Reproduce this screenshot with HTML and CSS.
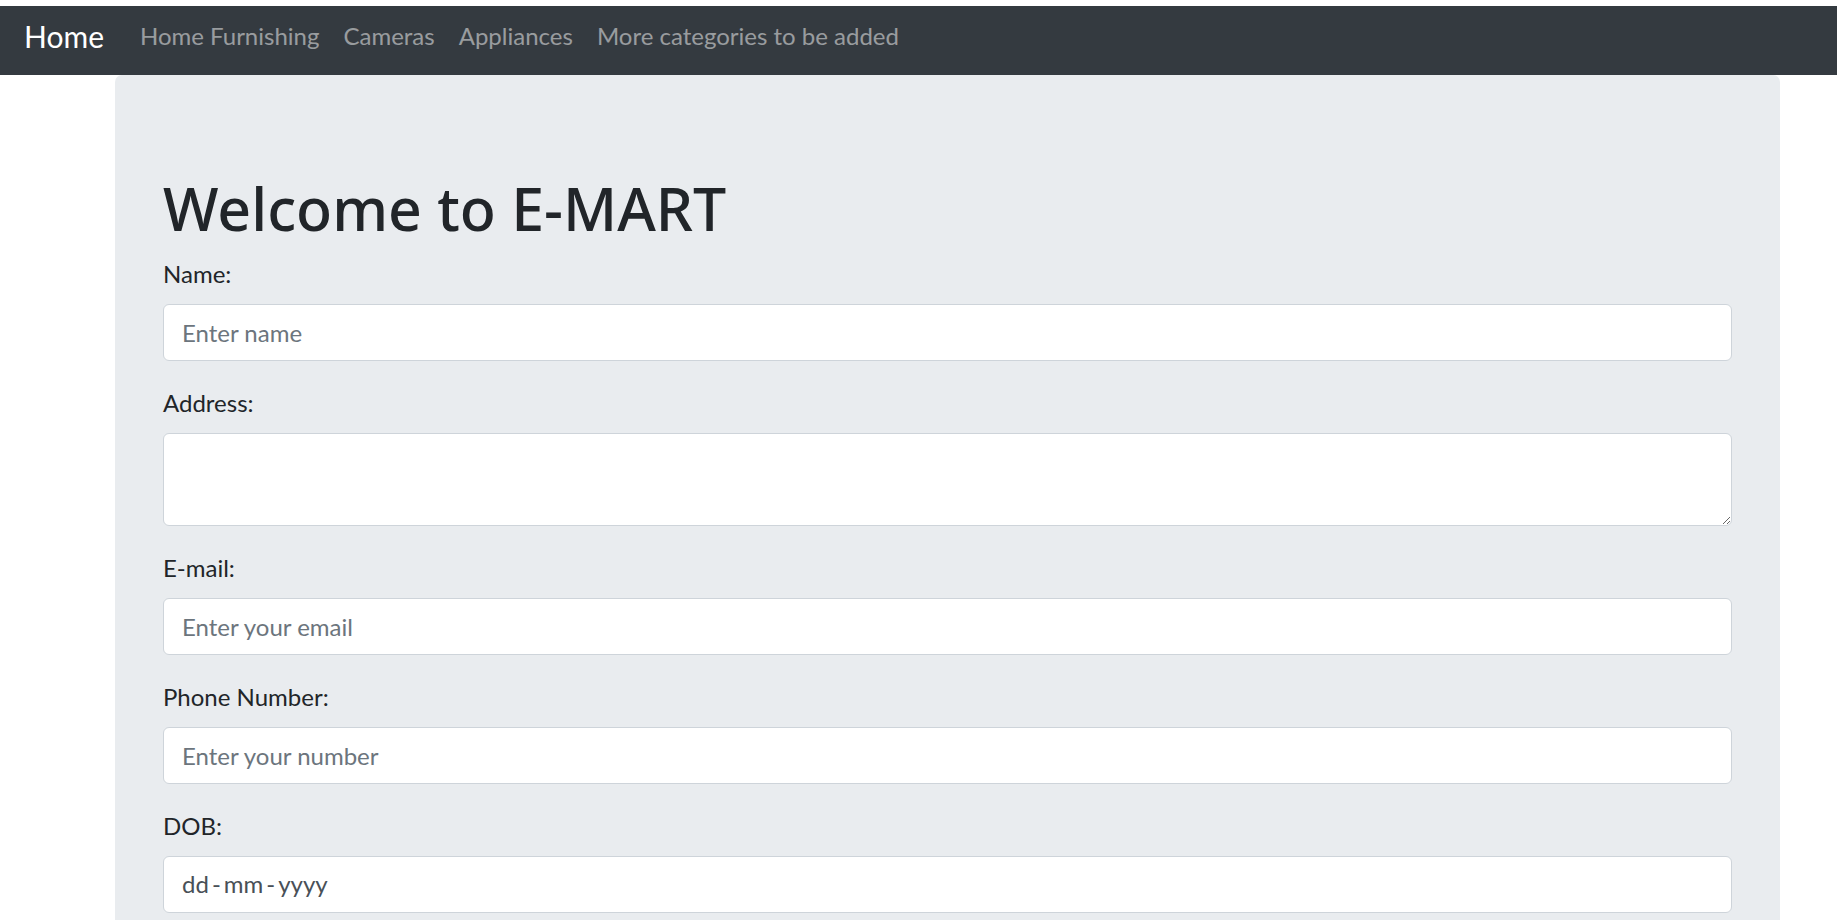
FILE: index.html
```html
<!DOCTYPE html>
<html lang="en">
<head>
<meta charset="utf-8">
<title>E-MART</title>
<link rel="stylesheet" href="styles.css">
</head>
<body>
<nav class="navbar">
  <a class="brand" href="#">Home</a>
  <ul class="nav">
    <li><a class="nav-link" href="#">Home Furnishing</a></li>
    <li><a class="nav-link" href="#">Cameras</a></li>
    <li><a class="nav-link" href="#">Appliances</a></li>
    <li><a class="nav-link" href="#">More categories to be added</a></li>
  </ul>
</nav>
<div class="container">
  <div class="jumbotron">
    <h1 class="title">Welcome to E-MART</h1>
    <form class="form">
      <div class="form-group">
        <label class="label" for="name">Name:</label>
        <input class="form-control" id="name" type="text" placeholder="Enter name">
      </div>
      <div class="form-group">
        <label class="label" for="address">Address:</label>
        <textarea class="form-control textarea" id="address" rows="2"></textarea>
      </div>
      <div class="form-group">
        <label class="label" for="email">E-mail:</label>
        <input class="form-control" id="email" type="text" placeholder="Enter your email">
      </div>
      <div class="form-group">
        <label class="label" for="phone">Phone Number:</label>
        <input class="form-control" id="phone" type="text" placeholder="Enter your number">
      </div>
      <div class="form-group">
        <label class="label" for="dob">DOB:</label>
        <div class="form-control date" id="dob">dd<span class="sep">-</span>mm<span class="sep">-</span>yyyy</div>
      </div>
    </form>
  </div>
</div>
</body>
</html>
```
FILE: styles.css
```css
* { box-sizing: border-box; }
html, body { margin: 0; padding: 0; }
body {
  font-family: "Lato", "Noto Sans", sans-serif;
  font-size: 24px;
  line-height: 1.5;
  color: #212529;
  background: #fff;
  padding-top: 6px;
}
.navbar {
  display: flex;
  align-items: center;
  height: 69px;
  padding: 0 24px 10px 24px;
  background: #343a40;
}
.brand {
  color: #fff;
  font-size: 30px;
  text-decoration: none;
  margin-right: 24px;
  line-height: 1.2;
}
.nav {
  display: flex;
  list-style: none;
  margin: 0;
  padding: 0;
}
.nav-link {
  display: block;
  padding: 0 12px;
  color: rgba(255, 255, 255, 0.5);
  text-decoration: none;
}
.container {
  width: 1665px;
  margin: 0 0 0 115px;
}
.jumbotron {
  background: #e9ecef;
  border-radius: 7px;
  padding: 97px 48px 96px;
}
.title {
  margin: 0 0 12px;
  font-family: "Noto Sans", sans-serif;
  font-size: 59px;
  font-weight: 500;
  line-height: 72px;
}
.form-group { margin-bottom: 24px; }
.label {
  display: inline-block;
  margin-bottom: 12px;
}
.form-control {
  display: block;
  width: 100%;
  height: 57px;
  padding: 9px 18px;
  font-family: inherit;
  font-size: 24px;
  line-height: 1.5;
  color: #495057;
  background: #fff;
  border: 1.5px solid #ced4da;
  border-radius: 6px;
  margin: 0;
}
.form-control::placeholder { color: #6c757d; opacity: 1; }
.textarea {
  height: 93px;
  resize: vertical;
}
.date { color: #495057; }
.sep { padding: 0 3px; }
```
